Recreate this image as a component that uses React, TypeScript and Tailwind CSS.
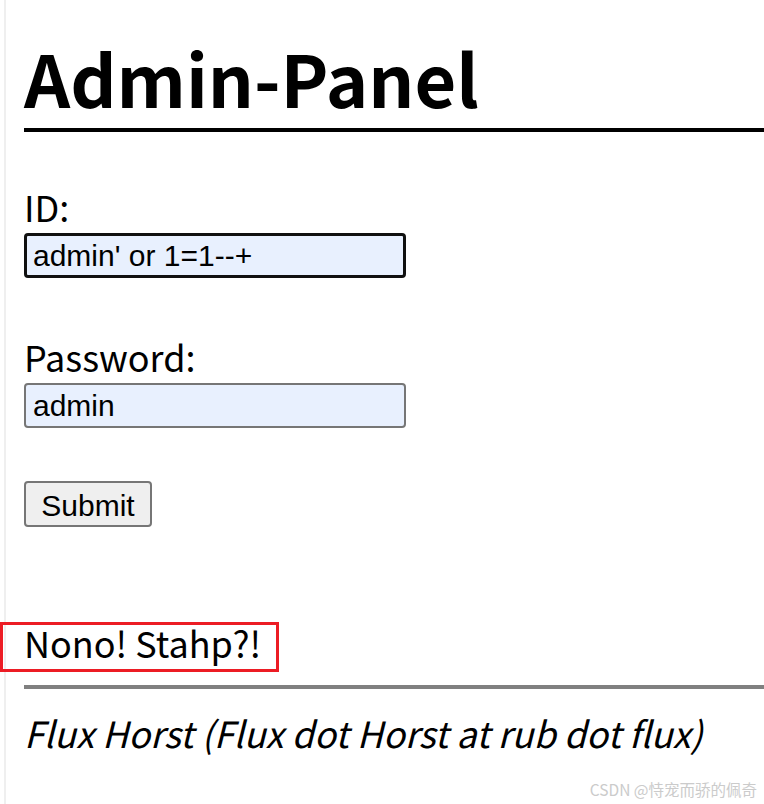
import React from "react";

const src = { fontFamily: '"Noto Sans CJK SC", "Noto Sans", sans-serif' };
const arial = { fontFamily: '"Liberation Sans", Arial, sans-serif' };

export default function App() {
  return (
    <div className="relative min-h-[804px] w-[764px] overflow-hidden bg-white text-black" style={src}>
      <div className="absolute left-[4px] top-0 bottom-0 w-[2px] bg-[#efefef]" />
      <div className="pl-[24px]">
        <h1 className="mt-[41px] border-b-[4px] border-black pb-[15px] text-[72px] font-bold leading-[72px]">
          Admin-Panel
        </h1>
        <form onSubmit={(e) => e.preventDefault()}>
          <label className="mt-[56px] block text-[36px] leading-[36px]">ID:</label>
          <input
            readOnly
            value="admin' or 1=1--+"
            className="mt-[9px] box-border block h-[45px] w-[382px] rounded-[4px] border-[3px] border-[#101010] bg-[#e8f0fe] px-[6px] text-[30px] text-black outline-none"
            style={arial}
          />
          <label className="mt-[60px] block text-[36px] leading-[36px]">Password:</label>
          <input
            readOnly
            value="admin"
            className="mt-[9px] box-border block h-[45px] w-[382px] rounded-[4px] border-[2px] border-[#767676] bg-[#e8f0fe] px-[7px] text-[30px] text-black outline-none"
            style={arial}
          />
          <button
            type="submit"
            className="mt-[53px] box-border block h-[46px] w-[128px] rounded-[4px] border-[2px] border-[#767676] bg-[#efefef] text-[30px] text-black"
            style={arial}
          >
            Submit
          </button>
        </form>
        <div className="relative mt-[97px]">
          <div className="text-[36px] leading-[36px]">Nono! Stahp?!</div>
          <div className="pointer-events-none absolute left-[-24px] top-[-2px] h-[50px] w-[279px] border-[3px] border-[#ec1c24]" />
        </div>
        <hr className="mt-[25px] border-0 h-[4px] bg-[#808080]" />
        <div className="mt-[25px] text-[36px] italic leading-[36px]">
          Flux Horst (Flux dot Horst at rub dot flux)
        </div>
      </div>
      <div className="absolute right-[7px] top-[779px] text-[15.5px] leading-[20px] text-[#cbcbcb]">
        CSDN @恃宠而骄的佩奇
      </div>
    </div>
  );
}
